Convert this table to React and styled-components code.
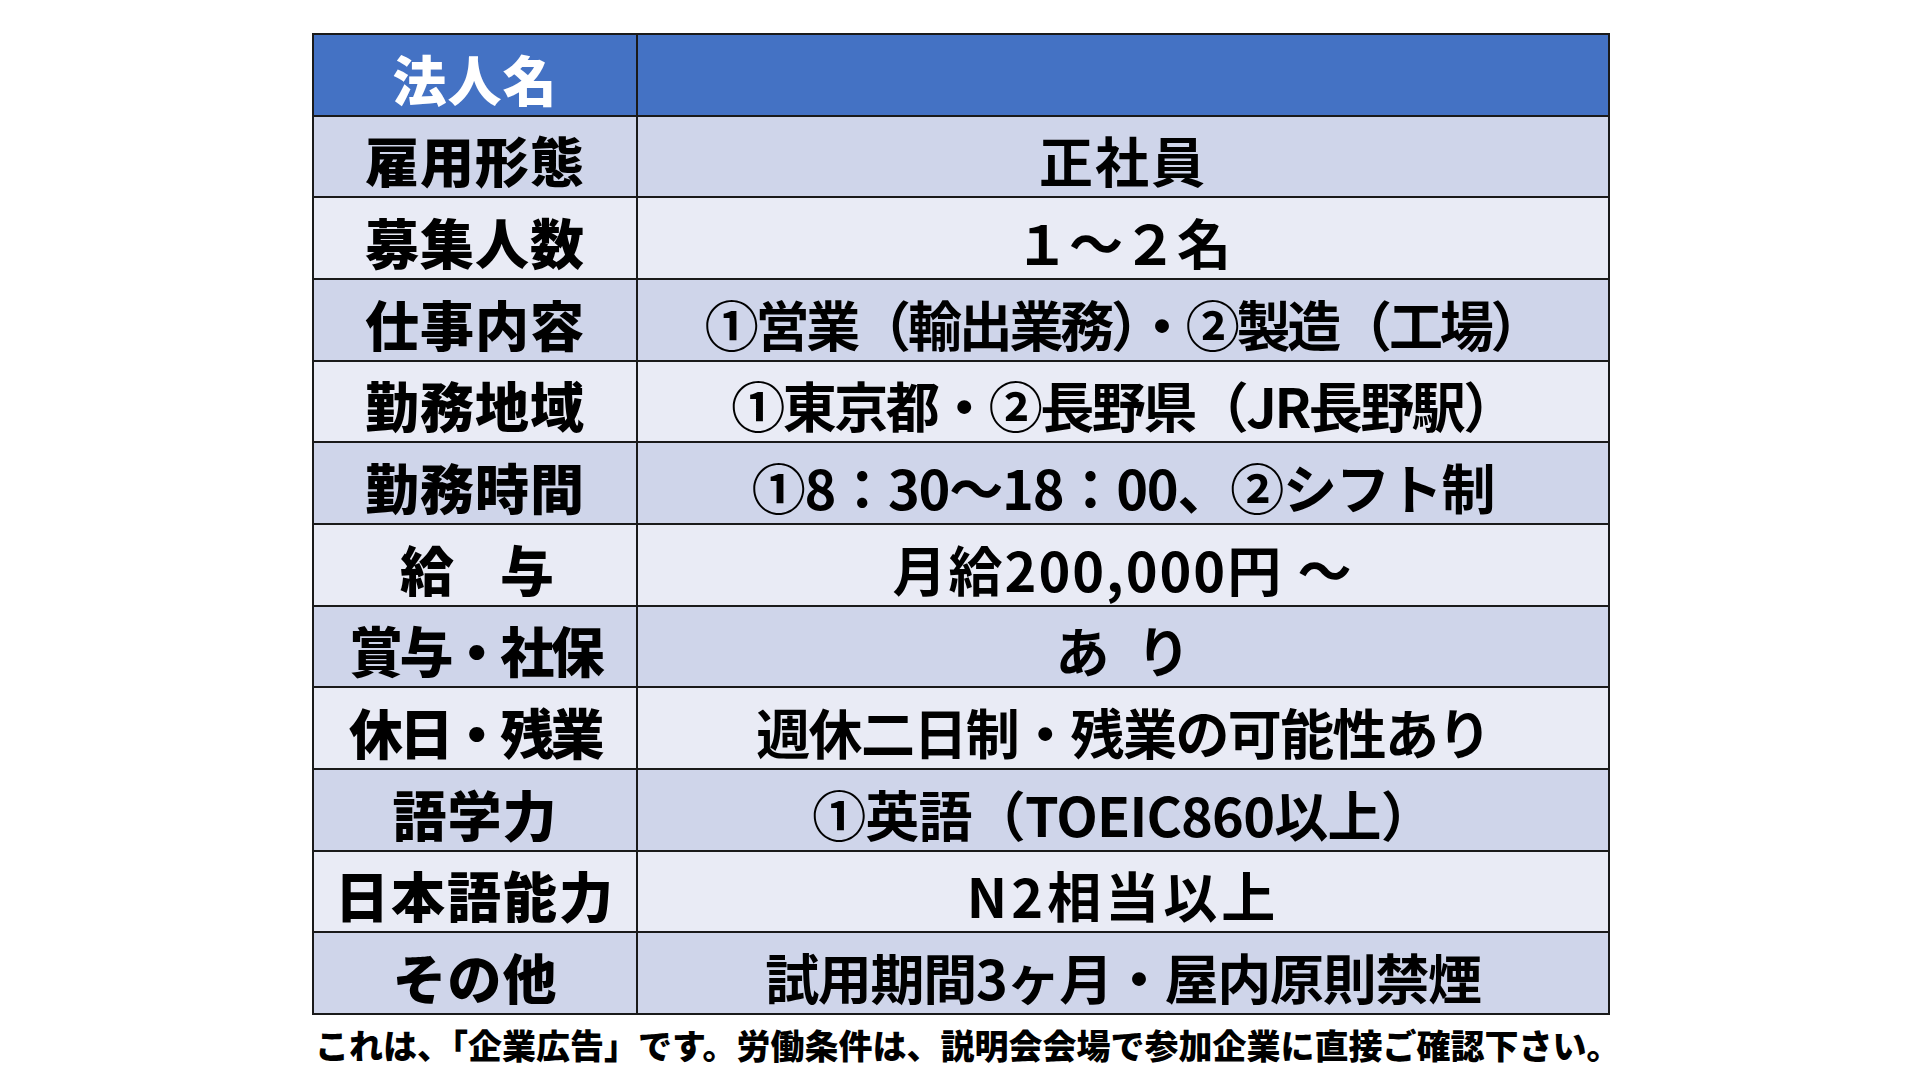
import React from "react";
import styled, { createGlobalStyle } from "styled-components";

const Global = createGlobalStyle`
  html, body { margin: 0; padding: 0; background: #ffffff; }
  body { font-family: "Noto Sans CJK JP", "Noto Sans", sans-serif; color: #000; }
`;

const Page = styled.div`
  width: 1920px;
  height: 1080px;
  display: flex;
  flex-direction: column;
  align-items: center;
  padding: 33px 0 0 2px;
  box-sizing: border-box;
`;

const Sheet = styled.div`
  width: 1298px;
  display: flex;
  flex-direction: column;
`;

const Table = styled.table`
  width: 1298px;
  border-collapse: collapse;
  table-layout: fixed;
  border: 2px solid #2a2a2a;
`;

const Row = styled.tr`
  height: 81.67px;
  background: ${(p) => (p.$head ? "#4472C4" : p.$odd ? "#CFD5EA" : "#E9EBF5")};
`;

const Label = styled.td`
  width: 322px;
  border: 2px solid #1a1a1a;
  text-align: center;
  vertical-align: middle;
  padding: 8px 0 0;
  font-size: 54px;
  font-weight: 900;
  line-height: 1;
  letter-spacing: ${(p) => p.$track ?? 1}px;
  color: ${(p) => (p.$head ? "#ffffff" : "#000000")};
  white-space: pre;
`;

const Value = styled.td`
  border: 2px solid #1a1a1a;
  text-align: center;
  vertical-align: middle;
  padding: 8px 0 0;
  font-size: 54px;
  font-weight: 700;
  line-height: 1;
  letter-spacing: ${(p) => p.$track ?? 0}px;
  white-space: pre;
`;

const Note = styled.p`
  margin: 10px 0 0 3px;
  font-size: 34px;
  font-weight: 900;
  line-height: 40px;
  white-space: nowrap;
`;

const rows = [
  { k: "雇用形態", v: "正社員", vt: 2 },
  { k: "募集人数", v: "１～２名", vt: 0 },
  { k: "仕事内容", v: "①営業（輸出業務）・②製造（工場）", vt: -3.2 },
  { k: "勤務地域", v: "①東京都・②長野県（JR長野駅）", vt: -2.5 },
  { k: "勤務時間", v: "①8：30～18：00、②シフト制", vt: -1.2 },
  { k: "給　与", kt: -4, v: "月給200,000円 ～", vt: 2 },
  { k: "賞与・社保", kt: -3.6, v: "あ\u2002り", vt: 0 },
  { k: "休日・残業", kt: -3.6, v: "週休二日制・残業の可能性あり", vt: -1.6 },
  { k: "語学力", v: "①英語（TOEIC860以上）", vt: -0.8 },
  { k: "日本語能力", kt: 2, v: "N2相当以上", vt: 4 },
  { k: "その他", v: "試用期間3ヶ月・屋内原則禁煙", vt: -1.3 },
];

export default function App() {
  return (
    <>
      <Global />
      <Page>
        <Sheet>
          <Table>
            <tbody>
              <Row $head>
                <Label $head>法人名</Label>
                <Value />
              </Row>
              {rows.map((r, i) => (
                <Row key={r.k} $odd={i % 2 === 0}>
                  <Label $track={r.kt}>{r.k}</Label>
                  <Value $track={r.vt}>{r.v}</Value>
                </Row>
              ))}
            </tbody>
          </Table>
          <Note>これは、「企業広告」です。労働条件は、説明会会場で参加企業に直接ご確認下さい。</Note>
        </Sheet>
      </Page>
    </>
  );
}
